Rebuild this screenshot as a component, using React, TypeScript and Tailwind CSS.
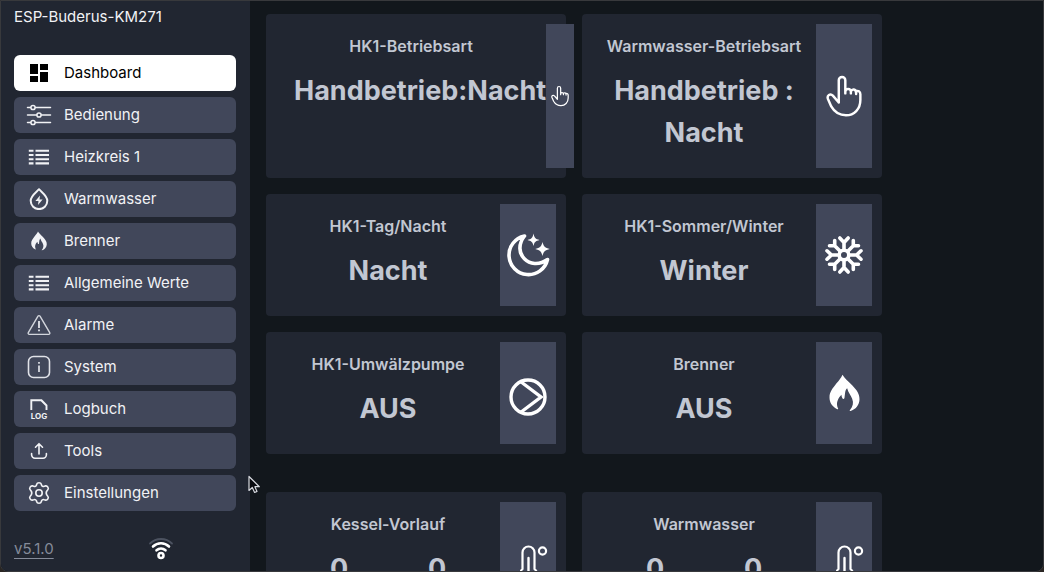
import type { ReactNode } from "react";
import { MdDashboard } from "react-icons/md";

function SlidersIcon() {
  return (
    <svg viewBox="0 0 26 22" className="h-[22px] w-[26px]" fill="none" stroke="currentColor" strokeWidth="1.5" strokeLinecap="round">
      <path d="M1.5 3.5h3M9.5 3.5h15M1.500 11h9M15.500 11h9M1.500 18.500h3M9.500 18.500h15" />
      <circle cx="7" cy="3.500" r="2.100" />
      <circle cx="13" cy="11" r="2.100" />
      <circle cx="7" cy="18.500" r="2.100" />
    </svg>
  );
}

function ListIcon() {
  return (
    <svg viewBox="0 0 22 16" className="h-4 w-[22px]" stroke="currentColor" strokeWidth="2.100">
      <path d="M.8 1.800h4.700M7.500 1.800h13.500M.8 6h4.700M7.500 6h13.500M.8 10.200h4.700M7.500 10.200h13.500M.8 14.400h4.700M7.500 14.400h13.500" />
    </svg>
  );
}

function DropIcon() {
  return (
    <svg viewBox="0 0 20 22" className="h-[22px] w-5" fill="none" stroke="currentColor" strokeWidth="2" strokeLinejoin="round">
      <path d="M10 1.200C7.500 4.200 1.700 7.800 1.700 12.800a8.300 8.300 0 0 0 16.600 0C18.300 7.800 12.500 4.200 10 1.200Z" />
      <path d="M11 7.500 6.400 13h3.100L9 17l4.600-5.500h-3.100Z" fill="currentColor" stroke="none" />
    </svg>
  );
}

function FlameIcon({ className }: { className: string }) {
  return (
    <svg viewBox="0 0 104 114" className={className} fill="currentColor">
      <path d="M46 2C52 13 62 20 75 34C90 50 97 60 97 76C97 93 85 107 70 111C67 111 67 109 69 107C77 97 80 86 75 74C71 64 63 56 60 43C53 48 54 61 52 71C51 76 47 76 45 71C44 68 43 66 43 62C31 74 26 88 32 102C34 106 33 107 29 105C15 98 7 86 7 70C7 54 16 44 28 28C36 18 42 12 46 2Z" />
    </svg>
  );
}

function WarningIcon() {
  return (
    <svg viewBox="0 0 24 22" className="h-[22px] w-6 text-[#d2d5dc]" fill="none" stroke="currentColor" strokeWidth="1.400" strokeLinejoin="round">
      <path d="M11 2.200 1.300 18.600a1.200 1.200 0 0 0 1 1.800h19.400a1.200 1.200 0 0 0 1-1.800L13 2.200a1.200 1.200 0 0 0-2 0Z" />
      <path d="M12 7v7M12 15.500v1.800" strokeWidth="2" />
    </svg>
  );
}

function InfoIcon() {
  return (
    <svg viewBox="0 0 24 24" className="size-6 text-[#e0e2e8]" fill="none" stroke="currentColor" strokeWidth="1.600">
      <rect x="1.500" y="1.500" width="21" height="21" rx="5" />
      <path d="M12 10.500v6.500M12 7v1.800" strokeWidth="1.700" />
    </svg>
  );
}

function LogIcon() {
  return (
    <svg viewBox="0 0 20 22" className="h-[22px] w-5" fill="none" stroke="currentColor" strokeWidth="1.900">
      <path d="M2.300 12V2.300h10.200l5 5V12M12.500 2.500l5 5" />
      <text x="10" y="21" textAnchor="middle" fontSize="8" fontWeight="700" fill="currentColor" stroke="none">LOG</text>
    </svg>
  );
}

function UploadIcon() {
  return (
    <svg viewBox="0 0 20 20" className="size-5" fill="none" stroke="currentColor" strokeWidth="1.600" strokeLinecap="round" strokeLinejoin="round">
      <path d="M10 13V3M6.500 6.200 10 2.700l3.500 3.500M2.600 12.500v1.300a3.400 3.400 0 0 0 3.400 3.400h8a3.400 3.400 0 0 0 3.400-3.400v-1.300" />
    </svg>
  );
}

function GearIcon() {
  return (
    <svg viewBox="0 0 24 24" className="size-6" fill="none" stroke="currentColor" strokeWidth="1.600" strokeLinejoin="round">
      <path d="M9.700 3.200C10.200 1.200 13.800 1.200 14.300 3.200L14.600 4.400C15.200 5.400 16.200 5.700 17.200 5.300L18.400 4.900C20.400 4.400 22.200 7.300 20.800 8.800L20 9.800C19.100 11 19.100 13 20 14.200L20.800 15.200C22.200 16.700 20.400 19.600 18.400 19.100L17.200 18.700C16.200 18.300 15.200 18.600 14.600 19.600L14.300 20.800C13.800 22.800 10.200 22.800 9.700 20.800L9.400 19.600C8.800 18.600 7.800 18.300 6.800 18.700L5.600 19.100C3.600 19.600 1.800 16.700 3.200 15.200L4 14.200C4.900 13 4.900 11 4 9.800L3.200 8.800C1.800 7.300 3.600 4.400 5.600 4.900L6.800 5.300C7.800 5.700 8.800 5.400 9.400 4.400Z" />
      <circle cx="12" cy="12" r="3.200" />
    </svg>
  );
}

function HandIcon({ className }: { className: string }) {
  return (
    <svg viewBox="0 0 110 128" className={className} fill="none" stroke="currentColor" strokeWidth="7.500" strokeLinejoin="round" strokeLinecap="round">
      <path d="M39 84V16a10 10 0 0 1 20 0V56M59 50C61 40 75 41 76 50V56M76 50C80 41 91 43 92 52V58M91 51C98 45 105 51 105 59V76C105 104 86 123 61 123C38 123 24 110 16 96L6 73C2 63 13 55 21 63L39 84" />
    </svg>
  );
}

function MoonIcon() {
  return (
    <svg viewBox="0 0 44 44" className="size-11 shrink-0" fill="none" stroke="currentColor" strokeWidth="3.600" strokeLinejoin="round">
      <path d="M18.500 3A19.500 19.500 0 1 0 41.500 26.500C24 39 5 20 18.500 3Z" />
      <path d="M27.500 .5C28.400 5 29.500 6 33.500 7C29.500 8 28.400 9 27.500 13C26.600 9 25.500 8 21.500 7C25.500 6 26.600 5 27.500 .5ZM36.500 9C37.600 13.500 39 15 43.800 16C39 17 37.600 18.500 36.500 23C35.400 18.500 34 17 29.200 16C34 15 35.400 13.500 36.500 9Z" fill="currentColor" stroke="none" />
    </svg>
  );
}

function SnowflakeIcon() {
  return (
    <svg viewBox="-20 -20 40 40" className="size-10 shrink-0" fill="none" stroke="currentColor" strokeWidth="3.600" strokeLinecap="round" strokeLinejoin="round">
      <circle r="4.800" />
      {[0, 90, 180, 270].map((angle) => (
        <g key={angle} transform={`rotate(${angle})`}>
          <path d="M0-5V-12.500M-4.200-17 0-12.500l4.200-4.500" />
          <path d="M3.800-3.800 9.300-9.300M9.300-14.500V-9.300H14.500" />
        </g>
      ))}
    </svg>
  );
}

function PumpIcon() {
  return (
    <svg viewBox="0 0 40 40" className="mt-2 size-10 shrink-0" fill="none" stroke="currentColor" strokeWidth="3.400">
      <circle cx="20" cy="20" r="17" />
      <path d="M12.500 4.500 33 20 12.500 35.500" />
    </svg>
  );
}

function ThermometerIcon() {
  return (
    <svg viewBox="0 0 30 44" className="ml-3.5 h-11 w-[30px] shrink-0" fill="none" stroke="currentColor" strokeWidth="2.200" strokeLinecap="round">
      <path d="M2.500 26V9.500a6 6 0 0 1 12 0V26a9 9 0 1 1-12 0Z" />
      <path d="M8.500 15v18" strokeWidth="2.400" />
      <circle cx="22.500" cy="8" r="3.600" />
    </svg>
  );
}

function WifiIcon() {
  return (
    <svg viewBox="0 0 26 24" className="h-6 w-[26px]" fill="none" stroke="currentColor" strokeWidth="2.600" strokeLinecap="round">
      <path d="M2 6.500C8 .5 18 .5 24 6.500" stroke="#4c5260" strokeWidth="1.800" />
      <path d="M5 9.500c4.500-4.300 11.500-4.300 16 0M8.500 13.300c2.600-2.300 6.400-2.300 9 0" />
      <circle cx="13" cy="18.500" r="2.500" />
    </svg>
  );
}

const navItems: { label: string; icon: ReactNode }[] = [
  { label: "Dashboard", icon: <MdDashboard className="size-6" /> },
  { label: "Bedienung", icon: <SlidersIcon /> },
  { label: "Heizkreis 1", icon: <ListIcon /> },
  { label: "Warmwasser", icon: <DropIcon /> },
  { label: "Brenner", icon: <FlameIcon className="h-5 w-[18px]" /> },
  { label: "Allgemeine Werte", icon: <ListIcon /> },
  { label: "Alarme", icon: <WarningIcon /> },
  { label: "System", icon: <InfoIcon /> },
  { label: "Logbuch", icon: <LogIcon /> },
  { label: "Tools", icon: <UploadIcon /> },
  { label: "Einstellungen", icon: <GearIcon /> },
];

function Card({ title, icon, children }: { title: string; icon: ReactNode; children: ReactNode }) {
  return (
    <article className="flex rounded bg-[#212631] p-2.5">
      <div className="flex min-w-0 flex-1 flex-col gap-3 pt-2.5 pb-3.5 text-center">
        <h2 className="text-base leading-6 font-semibold whitespace-nowrap">{title}</h2>
        <div className="text-[27px] leading-[42px] font-bold">{children}</div>
      </div>
      <div className="flex w-14 shrink-0 items-center justify-center bg-[#41475a] text-white">{icon}</div>
    </article>
  );
}

function WideCard({ title, icon, children }: { title: string; icon: ReactNode; children: ReactNode }) {
  return (
    <article className="flex rounded bg-[#212631] p-2.5">
      <div className="flex shrink-0 flex-col gap-3 pt-2.5 pb-3.5 text-center">
        <h2 className="text-base leading-6 font-semibold">{title}</h2>
        <div className="pl-[18px] text-[27px] leading-[42px] font-bold whitespace-nowrap">{children}</div>
      </div>
      <div className="flex w-7 shrink-0 items-center justify-center bg-[#41475a] text-white">{icon}</div>
    </article>
  );
}

function Temperatures() {
  return (
    <div className="grid grid-cols-2 px-3.5 pb-6">
      <span>0</span>
      <span>0</span>
    </div>
  );
}

export default function App() {
  return (
    <div className="h-screen bg-[#2a2623] font-['Inter',sans-serif]">
      <div className="relative flex h-full overflow-hidden rounded-b-lg border border-[#38393c] bg-[#12171c] text-[#c2c7d2]">
        <aside className="flex w-[249px] shrink-0 flex-col bg-[#212631] pr-3.5 pl-[13px] text-[15px] text-[#f1f2f5]">
          <h1 className="mt-1 mb-[26px] leading-6">ESP-Buderus-KM271</h1>
          <nav className="flex flex-col gap-1.5">
            {navItems.map((item, index) => (
              <button
                key={item.label}
                type="button"
                className={
                  index === 0
                    ? "flex h-9 items-center rounded-md bg-white text-left text-black"
                    : "flex h-9 items-center rounded-md bg-[#41475a] text-left"
                }
              >
                <span className="flex w-[50px] justify-center" aria-hidden="true">{item.icon}</span>
                <span>{item.label}</span>
              </button>
            ))}
          </nav>
          <footer className="mt-[26px] flex items-center text-[#858b99]">
            <a href="#version" className="w-[134px] leading-6 underline underline-offset-4">v5.1.0</a>
            <span className="text-white" aria-label="WLAN">
              <WifiIcon />
            </span>
          </footer>
        </aside>

        <main className="flex min-w-0 flex-1 flex-col gap-[38px] overflow-hidden px-4 pt-[13px]">
          <section className="grid grid-cols-[300px_300px] gap-4">
            <WideCard title="HK1-Betriebsart" icon={<HandIcon className="h-[22px] w-[18px]" />}>Handbetrieb:Nacht</WideCard>
            <Card title="Warmwasser-Betriebsart" icon={<HandIcon className="h-[42px] w-9" />}>
              Handbetrieb :<br />Nacht
            </Card>
            <Card title="HK1-Tag/Nacht" icon={<MoonIcon />}>Nacht</Card>
            <Card title="HK1-Sommer/Winter" icon={<SnowflakeIcon />}>Winter</Card>
            <Card title="HK1-Umwälzpumpe" icon={<PumpIcon />}>AUS</Card>
            <Card title="Brenner" icon={<FlameIcon className="h-[38px] w-[35px]" />}>AUS</Card>
          </section>
          <section className="grid grid-cols-[300px_300px] gap-4">
            <Card title="Kessel-Vorlauf" icon={<ThermometerIcon />}><Temperatures /></Card>
            <Card title="Warmwasser" icon={<ThermometerIcon />}><Temperatures /></Card>
          </section>
        </main>

        <svg viewBox="0 0 12 20" className="pointer-events-none absolute top-[474px] left-[246px] h-5 w-3.5" fill="#090b10" stroke="#d8dae0" strokeWidth="1.200" strokeLinejoin="round" aria-hidden="true">
          <path d="M1 1.500V15.500L4.300 12.500 6.600 17.500 9 16.400 6.900 11.700H11.300Z" />
        </svg>
      </div>
    </div>
  );
}
